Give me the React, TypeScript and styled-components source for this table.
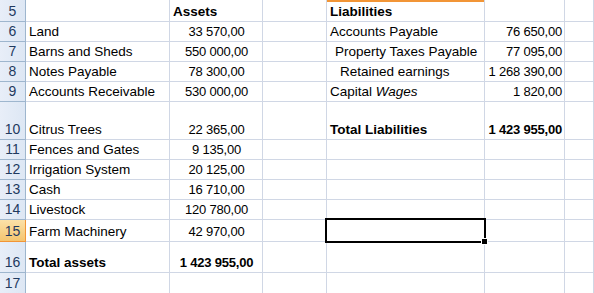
import React from "react";
import styled, { createGlobalStyle, css } from "styled-components";

const GlobalStyle = createGlobalStyle`
  html, body {
    margin: 0;
    padding: 0;
    background: #ffffff;
  }
`;

const Sheet = styled.div`
  width: 594px;
  height: 293px;
  overflow: hidden;
  font-family: "Liberation Sans", Arial, sans-serif;
  font-size: 13.5px;
  color: #000000;
  background: #ffffff;
`;

const Row = styled.div<{ $h: number }>`
  display: grid;
  grid-template-columns: 26px 144px 93px 64px 158px 80px 1fr;
  height: ${(p) => p.$h}px;
`;

const RowHead = styled.div<{ $active?: boolean }>`
  display: flex;
  align-items: flex-end;
  justify-content: center;
  padding-bottom: 2px;
  box-sizing: border-box;
  font-size: 14px;
  color: #1f3a5f;
  border-right: 1px solid #9eb6ce;
  border-bottom: 1px solid #9eb6ce;
  background: linear-gradient(to right, #e8eef8, #dde7f4);
  ${(p) =>
    p.$active &&
    css`
      background: linear-gradient(to bottom, #fbe1a8, #f5c56f);
      border-right-color: #f29536;
      border-bottom-color: #f29536;
    `}
`;

const Cell = styled.div<{
  $align?: "left" | "center" | "right";
  $bold?: boolean;
  $indent?: number;
  $colHead?: boolean;
  $selected?: boolean;
}>`
  position: relative;
  display: flex;
  align-items: flex-end;
  justify-content: ${(p) =>
    p.$align === "right" ? "flex-end" : p.$align === "center" ? "center" : "flex-start"};
  box-sizing: border-box;
  padding: 0 2px 2px ${(p) => 3 + (p.$indent || 0) * 5}px;
  border-right: 1px solid #d0d7e5;
  border-bottom: 1px solid #d0d7e5;
  white-space: nowrap;
  font-weight: ${(p) => (p.$bold ? 700 : 400)};
  ${(p) =>
    p.$align &&
    p.$align !== "left" &&
    css`
      font-size: 13px;
      letter-spacing: -0.2px;
    `}
  ${(p) =>
    p.$colHead &&
    css`
      box-shadow: inset 0 2px 0 #f29536;
    `}
  ${(p) =>
    p.$selected &&
    css`
      &::before {
        content: "";
        position: absolute;
        left: -2px;
        top: -2px;
        right: -2px;
        bottom: -2px;
        border: 2px solid #000000;
        z-index: 2;
      }
      &::after {
        content: "";
        position: absolute;
        right: -4px;
        bottom: -4px;
        width: 5px;
        height: 5px;
        background: #000000;
        border: 1px solid #ffffff;
        z-index: 3;
      }
    `}
`;

type Line = {
  n: number;
  h: number;
  label?: React.ReactNode;
  amount?: string;
  liab?: React.ReactNode;
  liabIndent?: number;
  liabAmount?: string;
  bold?: boolean;
  liabBold?: boolean;
  header?: boolean;
  selected?: boolean;
};

const lines: Line[] = [
  { n: 5, h: 22, header: true },
  { n: 6, h: 20, label: "Land", amount: "33 570,00", liab: "Accounts Payable", liabAmount: "76 650,00" },
  { n: 7, h: 20, label: "Barns and Sheds", amount: "550 000,00", liab: "Property Taxes Payable", liabIndent: 1, liabAmount: "77 095,00" },
  { n: 8, h: 20, label: "Notes Payable", amount: "78 300,00", liab: "Retained earnings", liabIndent: 2, liabAmount: "1 268 390,00" },
  { n: 9, h: 20, label: "Accounts Receivable", amount: "530 000,00", liab: <span>Capital <i>Wages</i></span>, liabAmount: "1 820,00" },
  { n: 10, h: 38, label: "Citrus Trees", amount: "22 365,00", liab: "Total Liabilities", liabAmount: "1 423 955,00", liabBold: true },
  { n: 11, h: 20, label: "Fences and Gates", amount: "9 135,00" },
  { n: 12, h: 20, label: "Irrigation System", amount: "20 125,00" },
  { n: 13, h: 20, label: "Cash", amount: "16 710,00" },
  { n: 14, h: 20, label: "Livestock", amount: "120 780,00" },
  { n: 15, h: 22, label: "Farm Machinery", amount: "42 970,00", selected: true },
  { n: 16, h: 31, label: "Total assets", amount: "1 423 955,00", bold: true },
  { n: 17, h: 21 },
];

export default function App() {
  return (
    <>
      <GlobalStyle />
      <Sheet>
        {lines.map((l) => (
          <Row key={l.n} $h={l.h}>
            <RowHead $active={l.selected}>{l.n}</RowHead>
            <Cell $bold={l.bold}>{l.label}</Cell>
            {l.header ? (
              <Cell $bold>Assets</Cell>
            ) : (
              <Cell $align="center" $bold={l.bold}>
                {l.amount}
              </Cell>
            )}
            <Cell />
            <Cell
              $bold={l.header || l.liabBold}
              $indent={l.liabIndent}
              $colHead={l.header}
              $selected={l.selected}
            >
              {l.header ? "Liabilities" : l.liab}
            </Cell>
            <Cell $align="right" $bold={l.liabBold}>
              {l.liabAmount}
            </Cell>
            <Cell />
          </Row>
        ))}
      </Sheet>
    </>
  );
}
